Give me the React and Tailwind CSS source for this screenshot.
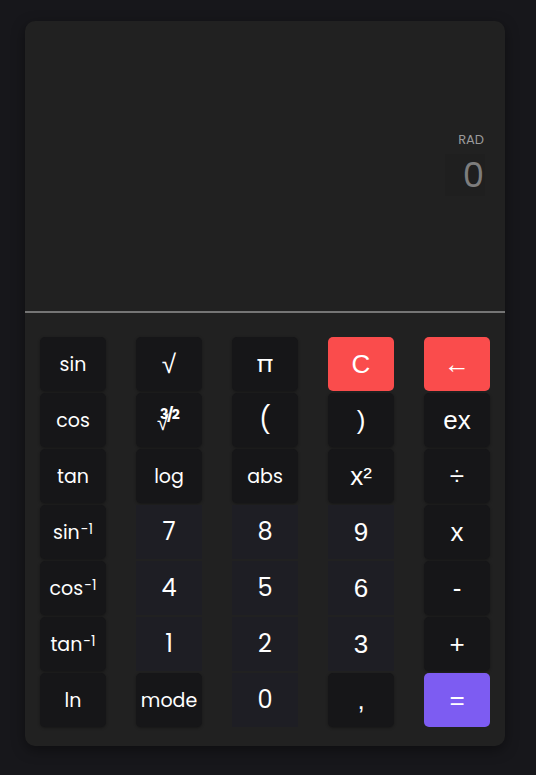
import React, { useState } from 'react';

const poppins = "font-['Poppins','Lato','Open_Sans',sans-serif]";
const arial = "font-['Liberation_Sans',Arial,sans-serif]";

const Sup = ({ base }) => (
  <span>
    {base}
    <sup className="text-[14px] relative -top-[5px] ml-[1px]">-1</sup>
  </span>
);

const CubeRoot = () => (
  <span className="relative inline-block w-[24px] h-[26px] leading-none">
    <span className="absolute left-[0px] top-[5px] !font-['Liberation_Sans',Arial,sans-serif] text-[21px]">√</span>
    <span className={`absolute top-[0px] left-[3px] text-[14px] font-bold tracking-[-1.5px] ${poppins}`}>3/2</span>
  </span>
);

const keys = [
  [
    { label: 'sin', kind: 'fn' },
    { label: '√', kind: 'fn', extra: "!font-['Liberation_Sans',Arial,sans-serif] !text-[26px]" },
    { label: 'π', kind: 'fn', extra: '!text-[24px]' },
    { label: 'C', kind: 'red' },
    { label: '←', kind: 'red' },
  ],
  [
    { label: 'cos', kind: 'fn' },
    { label: <CubeRoot />, kind: 'fn' },
    { label: '(', kind: 'fn', extra: '!text-[26px]' },
    { label: ')', kind: 'op' },
    { label: 'ex', kind: 'op' },
  ],
  [
    { label: 'tan', kind: 'fn' },
    { label: 'log', kind: 'fn' },
    { label: 'abs', kind: 'fn' },
    { label: 'x²', kind: 'op' },
    { label: '÷', kind: 'op' },
  ],
  [
    { label: <Sup base="sin" />, kind: 'fn' },
    { label: '7', kind: 'num' },
    { label: '8', kind: 'num' },
    { label: '9', kind: 'numop' },
    { label: 'x', kind: 'op' },
  ],
  [
    { label: <Sup base="cos" />, kind: 'fn' },
    { label: '4', kind: 'num' },
    { label: '5', kind: 'num' },
    { label: '6', kind: 'numop' },
    { label: '-', kind: 'op' },
  ],
  [
    { label: <Sup base="tan" />, kind: 'fn' },
    { label: '1', kind: 'num' },
    { label: '2', kind: 'num' },
    { label: '3', kind: 'numop' },
    { label: '+', kind: 'op' },
  ],
  [
    { label: 'ln', kind: 'fn' },
    { label: 'mode', kind: 'fn' },
    { label: '0', kind: 'num' },
    { label: ',', kind: 'op' },
    { label: '=', kind: 'eq' },
  ],
];

const styleFor = (kind) => {
  switch (kind) {
    case 'fn':
      return `${poppins} text-[19px] bg-[#161618] rounded-[5px] shadow-[0_1px_3px_rgba(0,0,0,0.35)]`;
    case 'num':
      return `${poppins} text-[24px] bg-[#1e1e24]`;
    case 'numop':
      return `${arial} text-[26px] bg-[#1e1e24]`;
    case 'op':
      return `${arial} text-[26px] bg-[#161618] rounded-[5px] shadow-[0_1px_3px_rgba(0,0,0,0.35)]`;
    case 'red':
      return `${arial} text-[26px] bg-[#fa4c4c] rounded-[5px]`;
    case 'eq':
      return `${arial} text-[26px] bg-[#7d5cf2] rounded-[5px]`;
    default:
      return '';
  }
};

const App = () => {
  const [value] = useState('0');

  return (
    <div className="min-h-screen bg-[#17171b] pt-[21px] px-[25px]">
      <div className="w-[480px] bg-[#212121] rounded-[10px] shadow-[0_4px_14px_rgba(0,0,0,0.4)] overflow-hidden">

        <div className="h-[290px] flex flex-col items-end justify-center pr-[20px] pb-[4px]">
          <span className={`${poppins} text-[13px] text-[#9a9a9a] leading-[14px] mr-[1px]`}>RAD</span>
          <div className={`${poppins} mt-[7px] bg-[#1f1f1f] text-[34px] text-[#7d7d7d] leading-[42px] w-[40px] text-right pr-[1px]`}>
            {value}
          </div>
        </div>

        <div className="h-[2px] bg-[#757575]" />

        <div className="grid grid-cols-5 gap-x-[30px] gap-y-[2px] px-[15px] pt-[24px] pb-[19px]">
          {keys.flat().map((k, i) => (
            <button
              key={i}
              className={`h-[54px] flex items-center justify-center text-white leading-none ${styleFor(k.kind)} ${k.extra || ''}`}
            >
              {k.label}
            </button>
          ))}
        </div>
      </div>
    </div>
  );
};

export default App;
